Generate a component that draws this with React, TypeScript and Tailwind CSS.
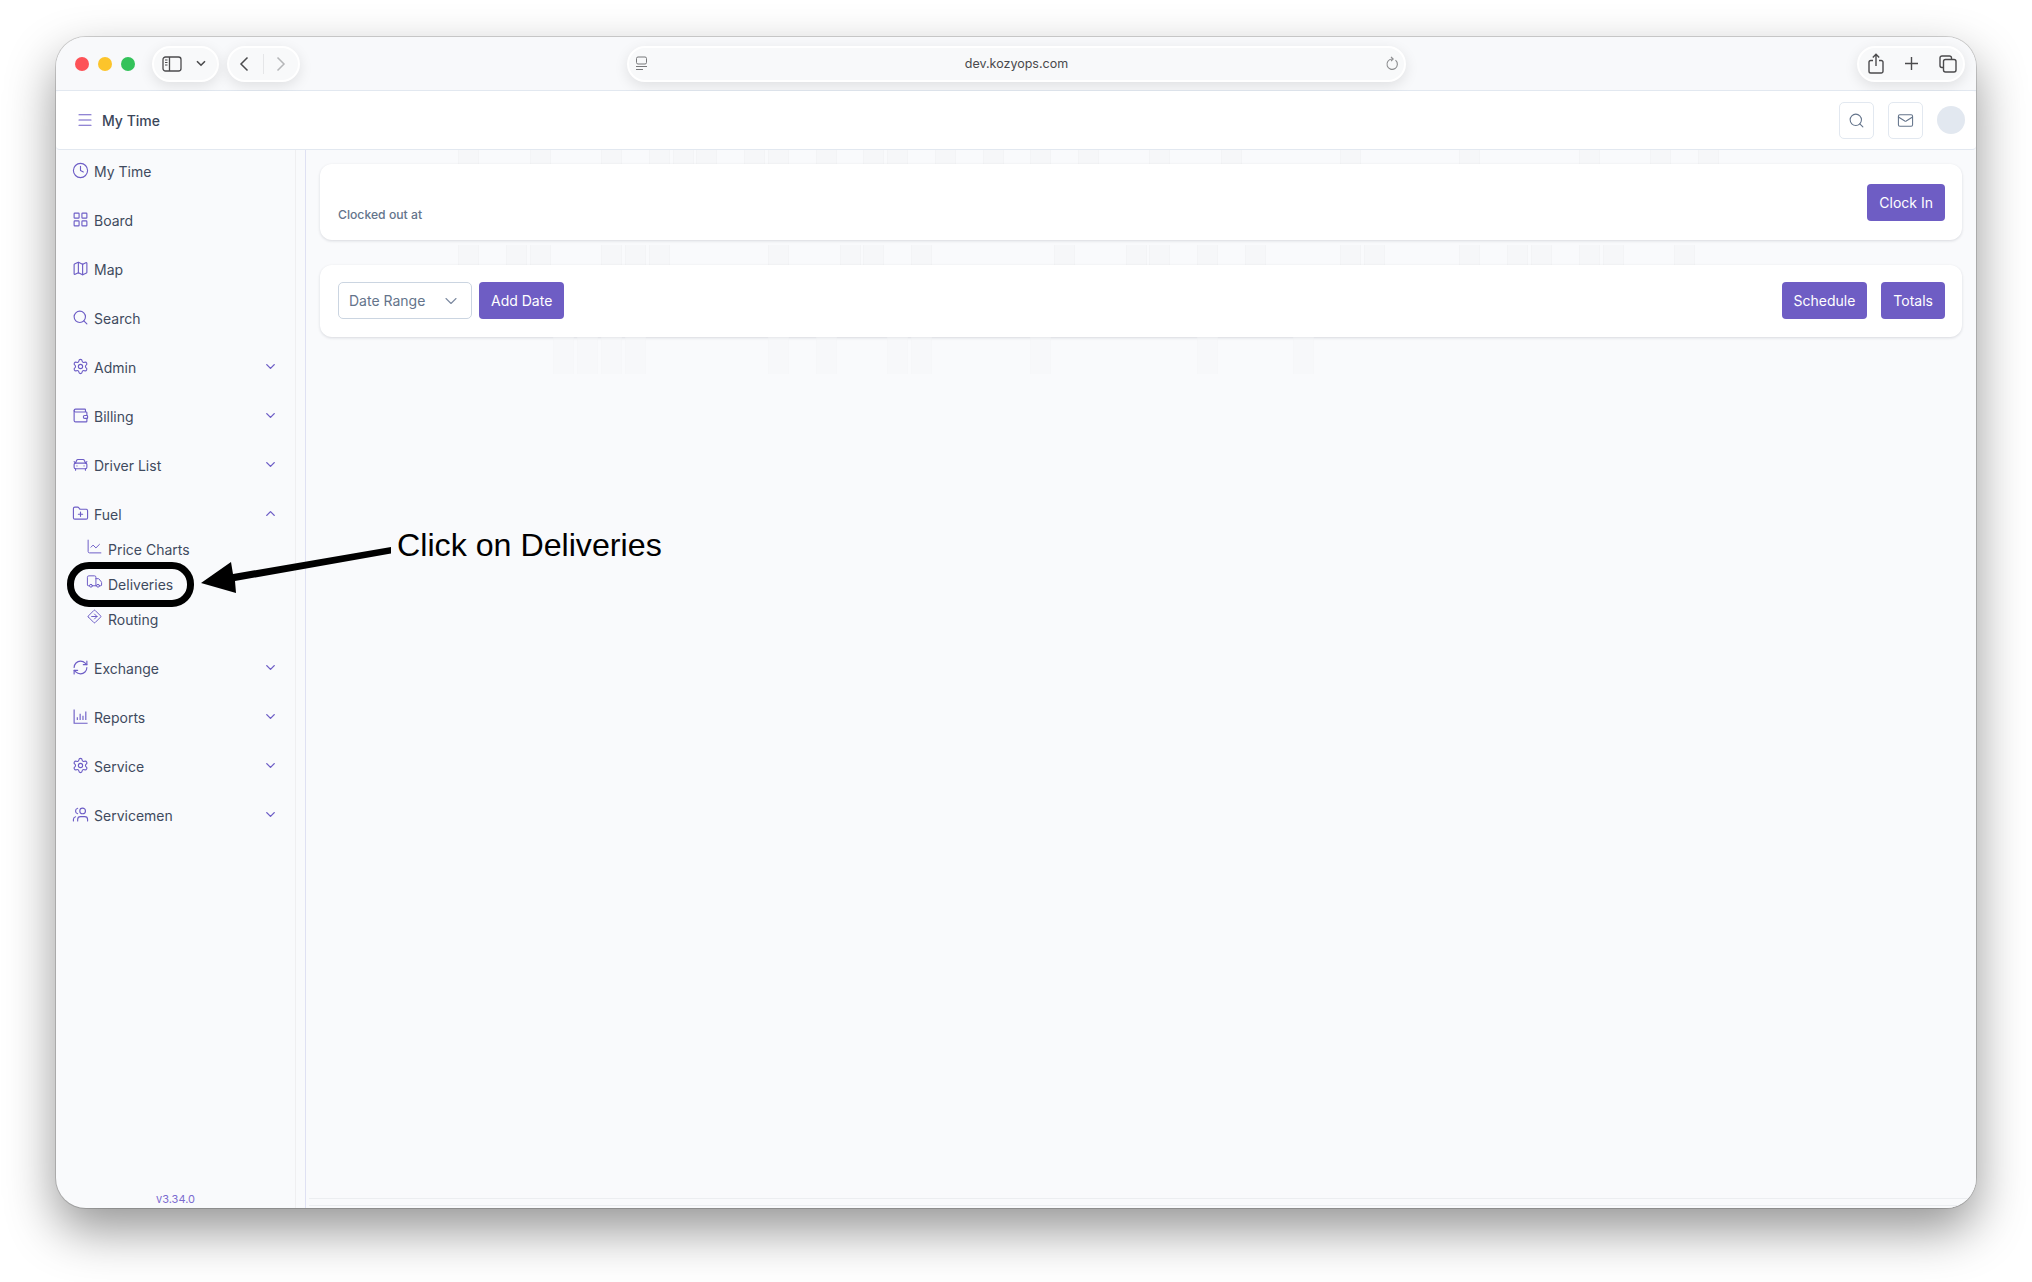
import type { ReactNode } from "react";
import {
  CarFront,
  ChartLine,
  ChevronDown,
  ChevronUp,
  Clock,
  FolderPlus,
  LayoutGrid,
  Mail,
  Map as MapIcon,
  Menu,
  RefreshCw,
  Search,
  Settings,
  Truck,
  Users,
  Wallet,
} from "lucide-react";
import { TbDirectionSign } from "react-icons/tb";

// axis + bars, the package icons don't have both
function ReportsIcon({ className }: { className?: string }) {
  return (
    <svg className={className} viewBox="0 0 24 24" fill="none" stroke="currentColor" strokeWidth="1.6">
      <path d="M3 2v19.5h19" />
      <path d="M7.5 17v-4M11.5 17V8M15.5 17v-6M19.5 17V5" />
    </svg>
  );
}

function CrewIcon({ className }: { className?: string }) {
  return <Users className={`${className} -scale-x-100`} strokeWidth={1.6} />;
}

const NAV_TOP = [
  { label: "My Time", icon: Clock },
  { label: "Board", icon: LayoutGrid },
  { label: "Map", icon: MapIcon },
  { label: "Search", icon: Search },
  { label: "Admin", icon: Settings, chevron: "down" },
  { label: "Billing", icon: Wallet, chevron: "down" },
  { label: "Driver List", icon: CarFront, chevron: "down" },
  { label: "Fuel", icon: FolderPlus, chevron: "up" },
];

const NAV_FUEL = [
  { label: "Price Charts", icon: ChartLine },
  { label: "Deliveries", icon: Truck },
  { label: "Routing", icon: TbDirectionSign },
];

const NAV_BOTTOM = [
  { label: "Exchange", icon: RefreshCw, chevron: "down" },
  { label: "Reports", icon: ReportsIcon, chevron: "down" },
  { label: "Service", icon: Settings, chevron: "down" },
  { label: "Servicemen", icon: CrewIcon, chevron: "down" },
];

// faint skeleton cells that show through between the cards
const BAND_ONE = [0, 3, 6, 8, 9, 10, 12, 13, 15, 17, 18, 20, 22, 24, 26, 29, 32, 37, 42, 47, 50, 52];
const BAND_TWO = [0, 2, 3, 6, 7, 8, 13, 16, 17, 19, 25, 28, 29, 31, 33, 37, 38, 42, 44, 45, 47, 48, 51];
const BAND_THREE = [4, 5, 6, 7, 13, 15, 18, 19, 24, 31, 35];

function GhostBand({ cells, className }: { cells: number[]; className: string }) {
  return (
    <div className={`flex pl-[152px] ${className}`}>
      {Array.from({ length: 53 }, (_, i) => (
        <div
          key={i}
          className={`h-full w-[21px] mr-[2.85px] shrink-0 ${
            cells.includes(i) ? "bg-[#f6f7f9] border-x border-[#f3f4f6]" : ""
          }`}
        />
      ))}
    </div>
  );
}

function NavRow({ label, icon: Icon, chevron }: { label: string; icon: any; chevron?: string }) {
  return (
    <div className="flex items-center h-[33px] pl-[16px] pr-[17px]">
      <Icon className="w-[17px] h-[17px] text-[#6d5dc6] -mt-[2px] shrink-0" strokeWidth={1.6} />
      <span className="ml-[5px] text-[14px] text-[#3f4a5e]">{label}</span>
      {chevron === "down" && <ChevronDown className="ml-auto w-[15px] h-[15px] text-[#6d5dc6] -mt-[3px]" strokeWidth={2.2} />}
      {chevron === "up" && <ChevronUp className="ml-auto w-[15px] h-[15px] text-[#6d5dc6] -mt-[3px]" strokeWidth={2.2} />}
    </div>
  );
}

function SubRow({ label, icon: Icon }: { label: string; icon: any }) {
  return (
    <div className="flex items-center h-[35px] pl-[30px]">
      <Icon className="w-[17px] h-[17px] text-[#6d5dc6] -mt-[7px] shrink-0" strokeWidth={1.4} />
      <span className="ml-[5px] text-[14px] text-[#3f4a5e]">{label}</span>
    </div>
  );
}

function PrimaryButton({ children }: { children: ReactNode }) {
  return (
    <button className="h-[37px] px-[12px] rounded-[4px] bg-[#6e5dc4] text-white text-[14px] font-normal">
      {children}
    </button>
  );
}

function Pill({ className, children }: { className: string; children: ReactNode }) {
  return (
    <div
      className={`h-[36px] rounded-[18px] bg-[#f8f9fa] border-2 border-white shadow-[0_4px_14px_rgba(0,0,0,0.1)] flex items-center ${className}`}
    >
      {children}
    </div>
  );
}

function TitleBar() {
  return (
    <div className="flex items-center h-[54px] pl-[19px] pr-[11px] bg-[#f8f9fb] border-b border-[#e2e8f0]">
      <span className="w-[14px] h-[14px] rounded-full bg-[#fd5257]" />
      <span className="w-[14px] h-[14px] rounded-full bg-[#fcc42b] ml-[9px]" />
      <span className="w-[14px] h-[14px] rounded-full bg-[#33c25a] ml-[9px]" />
      <Pill className="w-[67px] ml-[17px] pl-[8px]">
        <svg width="20" height="16" viewBox="0 0 20 16" fill="none" stroke="#4b4b4d" strokeWidth="1.3">
          <rect x="1" y="1" width="18" height="14" rx="2.5" />
          <path d="M7.5 1v14" />
          <path d="M3 4h2.5M3 6.5h2.5M3 9h2.5" strokeWidth="1" />
        </svg>
        <svg className="ml-[14px]" width="10" height="7" viewBox="0 0 10 7" fill="none" stroke="#4b4b4d" strokeWidth="1.6">
          <path d="M1 1.2 5 5.2l4-4" />
        </svg>
      </Pill>
      <Pill className="w-[73px] ml-[8px] pl-[10px]">
        <svg width="10" height="16" viewBox="0 0 10 16" fill="none" stroke="#4b4b4d" strokeWidth="1.5">
          <path d="M8.5 1.5 2 8l6.5 6.5" />
        </svg>
        <span className="w-px h-[20px] bg-[#e5e6e8] ml-[14px]" />
        <svg className="ml-[12px]" width="10" height="16" viewBox="0 0 10 16" fill="none" stroke="#b5b6b8" strokeWidth="1.5">
          <path d="M1.5 1.5 8 8l-6.5 6.5" />
        </svg>
      </Pill>
      <Pill className="w-[779px] ml-[327px] pl-[6px] pr-[5px] justify-between">
        <svg width="13" height="15" viewBox="0 0 13 15" fill="none" stroke="#77787a" strokeWidth="1">
          <rect x="1.5" y="1" width="10" height="7" rx="1.5" />
          <path d="M1 10.5h11M1 13.5h7" />
        </svg>
        <span className="text-[12.5px] text-[#4a4a4c] mt-[1px]">dev.kozyops.com</span>
        <svg width="14" height="16" viewBox="0 0 14 16" fill="none" stroke="#8a8b8d" strokeWidth="1.1">
          <path d="M10.5 4.2a5.2 5.2 0 1 1-3.5-1.2" />
          <path d="M6 0.8 8.2 3 6 5.2" />
        </svg>
      </Pill>
      <Pill className="w-[108px] ml-auto pl-[9px]">
        <svg width="16" height="21" viewBox="0 0 16 21" fill="none" stroke="#4b4b4d" strokeWidth="1.4">
          <path d="M5 7.5H2.8A1.8 1.8 0 0 0 1 9.3v8.9A1.8 1.8 0 0 0 2.8 20h10.4a1.8 1.8 0 0 0 1.8-1.8V9.3a1.8 1.8 0 0 0-1.8-1.8H11" />
          <path d="M8 13V1.5M4.8 4.5 8 1.3l3.2 3.2" />
        </svg>
        <svg className="ml-[20px]" width="15" height="15" viewBox="0 0 15 15" fill="none" stroke="#4b4b4d" strokeWidth="1.4">
          <path d="M7.5 1v13M1 7.5h13" />
        </svg>
        <svg className="ml-[20px]" width="18" height="18" viewBox="0 0 18 18" fill="none" stroke="#4b4b4d" strokeWidth="1.4">
          <path d="M12.5 4V3a2 2 0 0 0-2-2H3a2 2 0 0 0-2 2v7.5a2 2 0 0 0 2 2h1" />
          <rect x="4.5" y="4.5" width="12.5" height="12.5" rx="2" />
        </svg>
      </Pill>
    </div>
  );
}

function TopBar() {
  return (
    <div className="flex items-center h-[59px] pl-[20px] pr-[11px] bg-white border-b border-[#e2e8f0] rounded-[4px]">
      <Menu className="w-[18px] h-[18px] text-[#6d5dc6]" strokeWidth={1.5} />
      <span className="ml-[8px] text-[14px] font-medium text-[#3b465a]">My Time</span>
      <button className="ml-auto w-[35px] h-[37px] rounded-[5px] border border-[#e2e8f0] flex items-center justify-center">
        <Search className="w-[17px] h-[17px] text-[#64748b]" strokeWidth={1.5} />
      </button>
      <button className="ml-[14px] w-[35px] h-[37px] rounded-[5px] border border-[#e2e8f0] flex items-center justify-center">
        <Mail className="w-[17px] h-[17px] text-[#64748b]" strokeWidth={1.5} />
      </button>
      <span className="ml-[14px] w-[28px] h-[28px] rounded-full bg-[#e2e8f0]" />
    </div>
  );
}

function Sidebar() {
  return (
    <aside className="relative w-[250px] shrink-0 flex border-r border-[#dfe1f3]">
      <div className="w-[240px] pt-[5px] border-r border-[#efeff1] flex flex-col">
        <div className="flex flex-col gap-[16px]">
          {NAV_TOP.map((item) => (
            <NavRow key={item.label} {...item} />
          ))}
        </div>
        <div className="mt-[1px] flex flex-col">
          {NAV_FUEL.map((item) => (
            <SubRow key={item.label} {...item} />
          ))}
        </div>
        <div className="mt-[15px] flex flex-col gap-[16px]">
          {NAV_BOTTOM.map((item) => (
            <NavRow key={item.label} {...item} />
          ))}
        </div>
        <div className="mt-auto pb-[1px] text-center text-[11px] leading-[16px] text-[#7b6bd0]">
          v3.34.0
        </div>
      </div>
    </aside>
  );
}

function Main() {
  return (
    <main className="flex-1 min-w-0 flex flex-col bg-[#f9fafc] relative">
      <GhostBand cells={BAND_ONE} className="h-[14px]" />
      <section className="mx-[14px] h-[76px] bg-white rounded-[12px] shadow-[0_1px_3px_rgba(15,23,42,0.14)] flex items-center justify-between pl-[18px] pr-[17px]">
        <span className="mt-[26px] text-[12.2px] font-medium text-[#64748b]">Clocked out at</span>
        <PrimaryButton>Clock In</PrimaryButton>
      </section>
      <GhostBand cells={BAND_TWO} className="h-[20px] mt-[5px]" />
      <section className="mx-[14px] h-[72px] pb-[1px] bg-white rounded-[12px] shadow-[0_1px_3px_rgba(15,23,42,0.14)] flex items-center pl-[18px] pr-[17px]">
        <div className="w-[134px] h-[37px] rounded-[5px] border border-[#cbd5e1] flex items-center justify-between pl-[10px] pr-[10px]">
          <span className="text-[14px] text-[#64748b]">Date Range</span>
          <ChevronDown className="w-[20px] h-[20px] text-[#7c8aa0]" strokeWidth={1.3} />
        </div>
        <div className="ml-[7px]">
          <PrimaryButton>Add Date</PrimaryButton>
        </div>
        <div className="ml-auto flex gap-[14px]">
          <PrimaryButton>Schedule</PrimaryButton>
          <PrimaryButton>Totals</PrimaryButton>
        </div>
      </section>
      <GhostBand cells={BAND_THREE} className="h-[37px] opacity-40" />
      <div className="mt-auto ml-[3px] h-[8px] border-y border-[#eceef1]" />
      <div className="h-[2px]" />
    </main>
  );
}

export default function App() {
  return (
    <div className="relative w-[2032px] h-[1282px] overflow-hidden bg-white font-['Inter',sans-serif] pt-[37px] pl-[56px]">
      <div className="w-[1920px] h-[1171px] rounded-[30px] overflow-hidden flex flex-col bg-[#f9fafc] shadow-[0_0_0_1px_rgba(0,0,0,0.16),0_22px_50px_rgba(0,0,0,0.42)]">
        <TitleBar />
        <TopBar />
        <div className="flex-1 min-h-0 flex">
          <Sidebar />
          <Main />
        </div>
      </div>

      {/* Annotation drawn over the screenshot */}
      <div className="absolute left-[67px] top-[562px] w-[127px] h-[45px] border-[7px] border-black rounded-[22px]" />
      <svg className="absolute left-[195px] top-[540px]" width="205" height="60" viewBox="195 540 205 60" fill="black">
        <path d="M201 583 L231 562 L233 574 L391 547 L391 553.5 L235 581 L236 593 Z" />
      </svg>
      <span className="absolute left-[397px] top-[527px] text-[32.2px] leading-[37px] text-black font-['Liberation_Sans',Arial,sans-serif]">
        Click on Deliveries
      </span>
    </div>
  );
}
